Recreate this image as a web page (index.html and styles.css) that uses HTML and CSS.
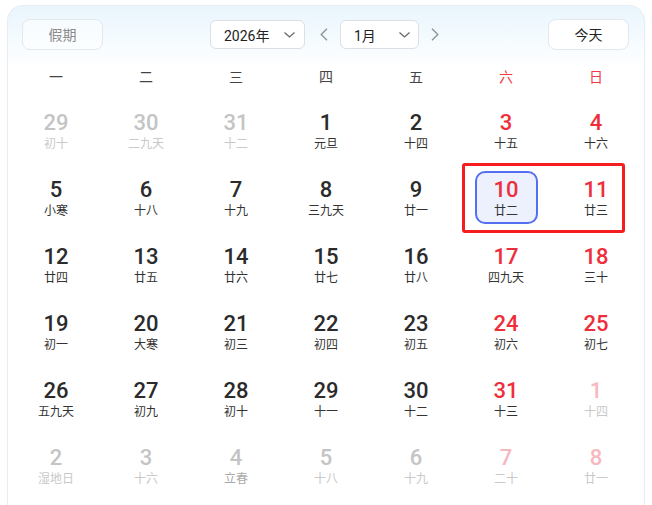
FILE: index.html
```html
<!DOCTYPE html>
<html lang="zh">
<head>
<meta charset="utf-8">
<link rel="stylesheet" href="styles.css">
</head>
<body>
<div class="card">
  <div class="header">
    <button class="btn btn-muted">假期</button>
    <div class="nav">
      <div class="select sel-year"><span>2026年</span><svg class="chev" width="11" height="6" viewBox="0 0 11 6"><polyline points="0.5,0.5 5.5,5 10.5,0.5" fill="none" stroke="#666" stroke-width="1.2"/></svg></div>
      <span class="arrow"><svg width="8" height="13" viewBox="0 0 8 13"><polyline points="7,0.8 1.2,6.5 7,12.2" fill="none" stroke="#8a8f99" stroke-width="1.3"/></svg></span>
      <div class="select sel-month"><span>1月</span><svg class="chev" width="11" height="6" viewBox="0 0 11 6"><polyline points="0.5,0.5 5.5,5 10.5,0.5" fill="none" stroke="#666" stroke-width="1.2"/></svg></div>
      <span class="arrow"><svg width="8" height="13" viewBox="0 0 8 13"><polyline points="1,0.8 6.8,6.5 1,12.2" fill="none" stroke="#8a8f99" stroke-width="1.3"/></svg></span>
    </div>
    <button class="btn">今天</button>
  </div>
  <div class="weekdays">
    <span>一</span><span>二</span><span>三</span><span>四</span><span>五</span><span class="wk">六</span><span class="wk">日</span>
  </div>
  <div class="grid">
    <div class="cell other"><div class="day"><b>29</b><i>初十</i></div></div>
    <div class="cell other"><div class="day"><b>30</b><i>二九天</i></div></div>
    <div class="cell other"><div class="day"><b>31</b><i>十二</i></div></div>
    <div class="cell"><div class="day"><b>1</b><i>元旦</i></div></div>
    <div class="cell"><div class="day"><b>2</b><i>十四</i></div></div>
    <div class="cell red"><div class="day"><b>3</b><i>十五</i></div></div>
    <div class="cell red"><div class="day"><b>4</b><i>十六</i></div></div>

    <div class="cell"><div class="day"><b>5</b><i>小寒</i></div></div>
    <div class="cell"><div class="day"><b>6</b><i>十八</i></div></div>
    <div class="cell"><div class="day"><b>7</b><i>十九</i></div></div>
    <div class="cell"><div class="day"><b>8</b><i>三九天</i></div></div>
    <div class="cell"><div class="day"><b>9</b><i>廿一</i></div></div>
    <div class="cell red"><div class="day selected"><b>10</b><i>廿二</i></div></div>
    <div class="cell red"><div class="day"><b>11</b><i>廿三</i></div></div>

    <div class="cell"><div class="day"><b>12</b><i>廿四</i></div></div>
    <div class="cell"><div class="day"><b>13</b><i>廿五</i></div></div>
    <div class="cell"><div class="day"><b>14</b><i>廿六</i></div></div>
    <div class="cell"><div class="day"><b>15</b><i>廿七</i></div></div>
    <div class="cell"><div class="day"><b>16</b><i>廿八</i></div></div>
    <div class="cell red"><div class="day"><b>17</b><i>四九天</i></div></div>
    <div class="cell red"><div class="day"><b>18</b><i>三十</i></div></div>

    <div class="cell"><div class="day"><b>19</b><i>初一</i></div></div>
    <div class="cell"><div class="day"><b>20</b><i>大寒</i></div></div>
    <div class="cell"><div class="day"><b>21</b><i>初三</i></div></div>
    <div class="cell"><div class="day"><b>22</b><i>初四</i></div></div>
    <div class="cell"><div class="day"><b>23</b><i>初五</i></div></div>
    <div class="cell red"><div class="day"><b>24</b><i>初六</i></div></div>
    <div class="cell red"><div class="day"><b>25</b><i>初七</i></div></div>

    <div class="cell"><div class="day"><b>26</b><i>五九天</i></div></div>
    <div class="cell"><div class="day"><b>27</b><i>初九</i></div></div>
    <div class="cell"><div class="day"><b>28</b><i>初十</i></div></div>
    <div class="cell"><div class="day"><b>29</b><i>十一</i></div></div>
    <div class="cell"><div class="day"><b>30</b><i>十二</i></div></div>
    <div class="cell red"><div class="day"><b>31</b><i>十三</i></div></div>
    <div class="cell other red"><div class="day"><b>1</b><i>十四</i></div></div>

    <div class="cell other"><div class="day"><b>2</b><i>湿地日</i></div></div>
    <div class="cell other"><div class="day"><b>3</b><i>十六</i></div></div>
    <div class="cell other"><div class="day"><b>4</b><i class="term">立春</i></div></div>
    <div class="cell other"><div class="day"><b>5</b><i>十八</i></div></div>
    <div class="cell other"><div class="day"><b>6</b><i>十九</i></div></div>
    <div class="cell other red"><div class="day"><b>7</b><i>二十</i></div></div>
    <div class="cell other red"><div class="day"><b>8</b><i>廿一</i></div></div>

    <div class="highlight"></div>
  </div>
  <div class="footer"></div>
</div>
</body>
</html>
```

FILE: styles.css
```css
* { box-sizing: border-box; }
html, body { margin: 0; padding: 0; background: #ffffff; overflow: hidden; }
body {
  font-family: "Roboto", "Noto Sans CJK SC", sans-serif;
  color: #2b2b2b;
}
.card {
  margin: 5px 0 0 7px;
  width: 638px;
  height: 520px;
  border: 1px solid #e6edf3;
  border-bottom: none;
  border-radius: 16px 16px 0 0;
  background: linear-gradient(to bottom, #e9f5fd 0px, #f5fbfe 35px, #ffffff 62px, #ffffff 100%);
  padding: 13px 3px 0 3px;
}
.header {
  display: flex;
  align-items: center;
  justify-content: space-between;
  padding: 0 12px 0 11px;
  height: 31px;
}
.btn {
  width: 81px;
  height: 31px;
  border: 1px solid #e3e8ee;
  border-radius: 8px;
  background: #ffffff;
  font-family: "Noto Sans CJK SC", sans-serif;
  font-size: 14px;
  color: #222;
  padding: 0;
  line-height: 29px;
}
.btn-muted { color: #8a8a8a; background: rgba(255,255,255,0.55); }
.nav {
  display: flex;
  align-items: center;
  margin-left: 4px;
}
.select {
  height: 29px;
  border: 1px solid #dcdfe6;
  border-radius: 6px;
  background: #ffffff;
  display: flex;
  align-items: center;
  justify-content: space-between;
  font-family: "Roboto", "Noto Sans CJK SC", sans-serif;
  font-size: 14px;
  color: #222;
}
.sel-year { width: 95px; padding: 0 9px 0 13px; }
.sel-month { width: 79px; padding: 0 8px 0 13px; }
.chev { display: block; }
.arrow {
  width: 20px;
  height: 29px;
  display: flex;
  align-items: center;
  justify-content: center;
}
.arrow:first-of-type { margin: 0 6px 0 9px; }
.sel-month + .arrow { margin: 0 0 0 6px; }
.weekdays {
  display: grid;
  grid-template-columns: repeat(7, 90px);
  height: 42px;
  margin-top: 7px;
  align-items: center;
  justify-items: center;
  font-family: "Noto Sans CJK SC", sans-serif;
  font-size: 14px;
  color: #444;
  padding-bottom: 4px;
}
.weekdays .wk { color: #f23a46; }
.grid {
  position: relative;
  display: grid;
  grid-template-columns: repeat(7, 90px);
  grid-auto-rows: 67px;
}
.cell {
  display: flex;
  justify-content: center;
  align-items: flex-start;
}
.day {
  margin-top: 5px;
  width: 63px;
  height: 53px;
  border: 2px solid transparent;
  border-radius: 10px;
  padding-top: 6px;
  display: flex;
  flex-direction: column;
  align-items: center;
}
.day b {
  font-family: "Roboto", sans-serif;
  font-weight: 500;
  font-size: 22px;
  line-height: 22px;
  color: #2b2b2b;
}
.day i {
  font-style: normal;
  font-family: "Noto Sans CJK SC", sans-serif;
  font-size: 12px;
  line-height: 18px;
  color: #333;
}
.red .day b { color: #ee2e3b; }
.other .day b { color: #c4c4c4; }
.other .day i { color: #c9c9c9; }
.other .day i.term { color: #aaaaaa; }
.other.red .day b { color: #f6b9bd; }
.day.selected {
  border-color: #5470f0;
  background: #edf0fd;
}
.highlight {
  position: absolute;
  left: 451px;
  top: 64px;
  width: 163px;
  height: 70px;
  border: 3px solid #f51d1d;
  border-radius: 3px;
  pointer-events: none;
}
.footer {
  margin: 5px 16px 0 16px;
  height: 12px;
  background: #f5f6f8;
  border-radius: 8px 8px 0 0;
}
```
